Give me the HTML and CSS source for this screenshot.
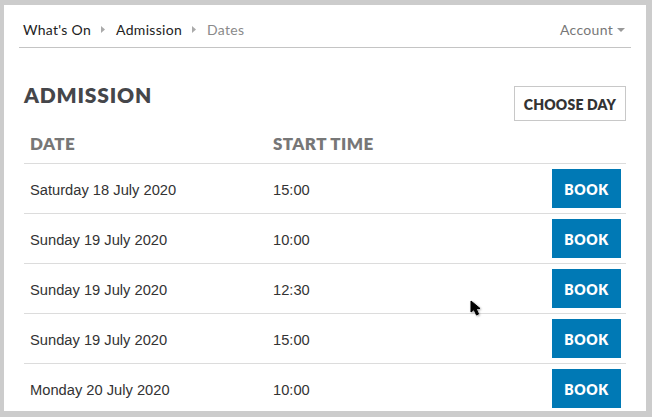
FILE: index.html
```html
<!DOCTYPE html>
<html lang="en">
<head>
<meta charset="utf-8">
<title>Admission – Dates</title>
<link rel="stylesheet" href="styles.css">
</head>
<body>
<div class="page">
  <nav class="topnav">
    <ol class="crumbs">
      <li class="crumb">What's On</li>
      <li class="sep"><svg width="4" height="7" viewBox="0 0 4 7"><path d="M0 0 L4 3.5 L0 7 Z" fill="#aaa"/></svg></li>
      <li class="crumb">Admission</li>
      <li class="sep"><svg width="4" height="7" viewBox="0 0 4 7"><path d="M0 0 L4 3.5 L0 7 Z" fill="#aaa"/></svg></li>
      <li class="crumb current">Dates</li>
    </ol>
    <div class="account">Account <svg width="8" height="4" viewBox="0 0 8 4"><path d="M0 0 L8 0 L4 4 Z" fill="#999"/></svg></div>
  </nav>
  <main class="content">
    <div class="title-row">
      <h1 class="title">ADMISSION</h1>
      <button class="choose">CHOOSE DAY</button>
    </div>
    <div class="table">
      <div class="row head">
        <div class="cell c-date">DATE</div>
        <div class="cell c-time">START TIME</div>
        <div class="cell c-act"></div>
      </div>
      <div class="row">
        <div class="cell c-date">Saturday 18 July 2020</div>
        <div class="cell c-time">15:00</div>
        <div class="cell c-act"><button class="book">BOOK</button></div>
      </div>
      <div class="row">
        <div class="cell c-date">Sunday 19 July 2020</div>
        <div class="cell c-time">10:00</div>
        <div class="cell c-act"><button class="book">BOOK</button></div>
      </div>
      <div class="row">
        <div class="cell c-date">Sunday 19 July 2020</div>
        <div class="cell c-time">12:30</div>
        <div class="cell c-act"><button class="book">BOOK</button></div>
      </div>
      <div class="row">
        <div class="cell c-date">Sunday 19 July 2020</div>
        <div class="cell c-time">15:00</div>
        <div class="cell c-act"><button class="book">BOOK</button></div>
      </div>
      <div class="row">
        <div class="cell c-date">Monday 20 July 2020</div>
        <div class="cell c-time">10:00</div>
        <div class="cell c-act"><button class="book">BOOK</button></div>
      </div>
    </div>
  </main>
  <svg class="cursor" width="14" height="18" viewBox="0 0 14 18"><path d="M1 1 L1 12 L4 9.5 L6.5 15 L8.5 14 L6 8.5 L10 8.5 Z" fill="#000" stroke="#000" stroke-width="1" stroke-linejoin="round"/></svg>
</div>
</body>
</html>
```

FILE: styles.css
```css
* { box-sizing: border-box; }
html, body { margin: 0; padding: 0; }
body {
  background: #cccccc;
  width: 652px;
  height: 417px;
  overflow: hidden;
  font-family: "Lato", "Noto Sans", sans-serif;
}
.page {
  position: relative;
  margin: 5px 6px 0 4px;
  height: 406px;
  background: #ffffff;
  overflow: hidden;
}
.topnav {
  margin: 0 15px;
  height: 43px;
  border-bottom: 1px solid #c4c4c4;
  display: flex;
  align-items: center;
  justify-content: space-between;
  padding: 7px 6px 0 4px;
  font-size: 14px;
  letter-spacing: 0.3px;
}
.crumbs {
  list-style: none;
  margin: 0;
  padding: 0;
  display: flex;
  align-items: center;
}
.crumb { color: #222; }
.crumb.current { color: #8a8a8a; }
.sep {
  display: flex;
  align-items: center;
  padding: 0 11px 0 10px;
}
.account {
  color: #777;
  display: flex;
  align-items: center;
  gap: 4px;
}
.content {
  padding: 34px 20px 0 20px;
}
.title-row {
  display: flex;
  justify-content: space-between;
  align-items: flex-start;
}
.title {
  margin: 0;
  font-size: 21px;
  line-height: 25px;
  font-weight: 800;
  letter-spacing: 0.8px;
  color: #45464a;
}
.choose {
  margin-top: 4px;
  width: 112px;
  height: 35px;
  background: #fff;
  border: 1px solid #c8c8c8;
  font-family: "Lato", "Noto Sans", sans-serif;
  font-weight: 800;
  font-size: 14px;
  letter-spacing: 0.2px;
  color: #333;
  padding: 2px 0 0 0;
}
.row {
  display: grid;
  grid-template-columns: 243px 1fr 80px;
  border-bottom: 1px solid #dcdcdc;
  height: 50px;
  align-items: center;
}
.row.head {
  height: 43px;
  align-items: start;
  padding-top: 13px;
}
.cell { padding-left: 6px; }
.head .cell {
  font-size: 17px;
  line-height: 20px;
  font-weight: 800;
  color: #777;
  letter-spacing: 0.4px;
}
.row:not(.head) .c-date,
.row:not(.head) .c-time {
  font-family: "Liberation Sans", Arial, sans-serif;
  font-size: 14.7px;
  color: #333;
  padding-top: 3px;
}
.c-act {
  display: flex;
  justify-content: flex-end;
  padding-right: 5px;
}
.book {
  width: 70px;
  height: 39px;
  background: #0079b5;
  border: none;
  color: #fff;
  font-family: "Lato", "Noto Sans", sans-serif;
  font-weight: 800;
  font-size: 14px;
  letter-spacing: 0.6px;
  padding: 1px 0 0 0;
}
.cursor {
  position: absolute;
  left: 466px;
  top: 295px;
  filter: drop-shadow(1px 1px 1px rgba(0,0,0,0.4));
}
```
